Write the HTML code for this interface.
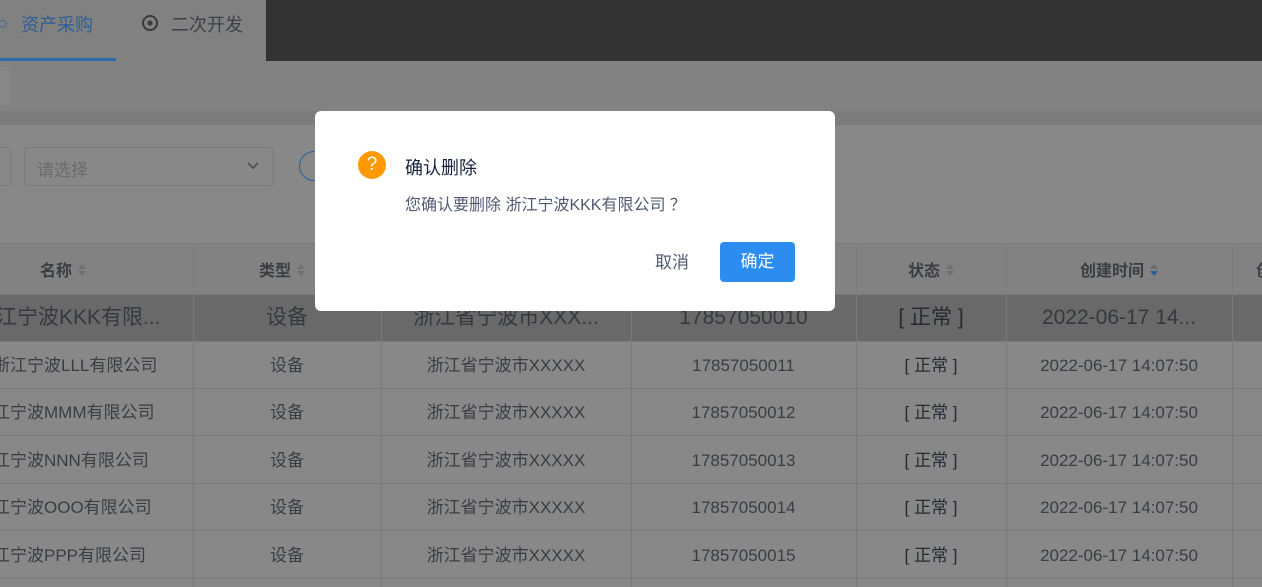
<!DOCTYPE html><html><head><meta charset="utf-8"><style>
*{margin:0;padding:0;box-sizing:border-box}
body{width:1262px;height:587px;overflow:hidden;position:relative;background:#888;font-family:"Liberation Sans","Noto Sans CJK SC",sans-serif;color:#3a3d42}
.a{position:absolute}
.cell{position:absolute;text-align:center;white-space:nowrap;overflow:hidden;line-height:24px;height:24px}
.vl{position:absolute;width:1px;background:#7a7a7a}
.hl{position:absolute;left:0;width:1262px;height:1px;background:#7a7a7a}
.sort{display:inline-block;vertical-align:middle;margin-left:6px;width:8px;height:14px;position:relative;top:-2px}
.sort:before{content:"";position:absolute;top:1px;left:0;border:4px solid transparent;border-bottom:5px solid #6e6e6e;border-top:0}
.sort:after{content:"";position:absolute;bottom:1px;left:0;border:4px solid transparent;border-top:5px solid #6e6e6e;border-bottom:0}
.sort.d:after{border-top-color:#2a5d9a}
.st{color:#262a33}
</style></head><body>
<div class="a" style="left:0;top:0;width:266px;height:61px;background:#818181"></div>
<div class="a" style="left:266px;top:0;width:996px;height:61px;background:#333"></div>
<div class="a" style="left:0;top:58px;width:116px;height:3px;background:#2e6aa8"></div>
<div class="a" style="left:-6px;top:12px;font-size:18px;color:#2e5f94">☼</div>
<div class="a" style="left:21px;top:11px;font-size:18px;color:#2e5f94">资产采购</div>
<div class="a" style="left:142px;top:15px;width:16px;height:16px;border-radius:50%;border:2px solid #3a3a3a;background:radial-gradient(circle,#3a3a3a 0 2px,transparent 3px)"></div>
<div class="a" style="left:171px;top:11px;font-size:18px;color:#3e4147">二次开发</div>
<div class="a" style="left:0;top:61px;width:1262px;height:50px;background:#828282"></div>
<div class="a" style="left:-10px;top:67px;width:20px;height:38px;border-radius:3px;background:#878787"></div>
<div class="a" style="left:0;top:111px;width:1262px;height:14px;background:#7c7c7c"></div>
<div class="a" style="left:-10px;top:147px;width:21px;height:39px;border:1px solid #7a7a7a;border-radius:4px"></div>
<div class="a" style="left:24px;top:147px;width:250px;height:39px;border:1px solid #7a7a7a;border-radius:4px;font-size:17px;color:#6a6a6a;padding:8px 0 0 12px">请选择<svg style="position:absolute;right:14px;top:14px" width="12" height="8" viewBox="0 0 12 8"><path d="M1 1l5 5 5-5" fill="none" stroke="#555" stroke-width="2"/></svg></div>
<div class="a" style="left:299px;top:151px;width:30px;height:30px;border:1px solid #2e5f94;border-radius:50%"></div>
<div class="a" style="left:0;top:243px;width:1262px;height:51px;background:#828282"></div>
<div class="a" style="left:0;top:294px;width:1262px;height:47px;background:#696969"></div>
<div class="hl" style="top:243px"></div><div class="hl" style="top:294px"></div><div class="hl" style="top:341px"></div><div class="hl" style="top:388px"></div><div class="hl" style="top:435px"></div><div class="hl" style="top:483px"></div><div class="hl" style="top:530px"></div><div class="hl" style="top:578px"></div>
<div class="vl" style="left:193px;top:243px;height:344px"></div><div class="vl" style="left:381px;top:243px;height:344px"></div><div class="vl" style="left:631px;top:243px;height:344px"></div><div class="vl" style="left:856px;top:243px;height:344px"></div><div class="vl" style="left:1006px;top:243px;height:344px"></div><div class="vl" style="left:1232px;top:243px;height:344px"></div>
<div style="font-weight:bold;font-size:16px;color:#3a3d42">
<div class="cell" style="left:40px;width:193px;top:260px;text-align:left">名称<i class="sort"></i></div>
<div class="cell" style="left:193px;width:188px;top:260px;text-align:left;padding-left:66px">类型<i class="sort"></i></div>
<div class="cell" style="left:856px;width:150px;top:260px">状态<i class="sort"></i></div>
<div class="cell" style="left:1006px;width:226px;top:260px">创建时间<i class="sort d"></i></div>
<div class="cell" style="left:1256px;top:260px">创</div>
</div>
<div style="font-size:21px;color:#35383d">
<div class="cell" style="left:-4px;top:306px;text-align:left">江宁波KKK有限...</div>
<div class="cell" style="left:193px;width:188px;top:306px">设备</div>
<div class="cell" style="left:381px;width:250px;top:306px">浙江省宁波市XXX...</div>
<div class="cell" style="left:631px;width:225px;top:306px">17857050010</div>
<div class="cell st" style="left:856px;width:150px;top:306px">[ 正常 ]</div>
<div class="cell" style="left:1006px;width:226px;top:306px">2022-06-17 14...</div>
</div>
<div style="font-size:17px;color:#3a3d42">
<div class="cell" style="left:-7px;top:354px;text-align:left">浙江宁波LLL有限公司</div>
<div class="cell" style="left:-7px;top:401px;text-align:left">江宁波MMM有限公司</div>
<div class="cell" style="left:-7px;top:449px;text-align:left">江宁波NNN有限公司</div>
<div class="cell" style="left:-7px;top:496px;text-align:left">江宁波OOO有限公司</div>
<div class="cell" style="left:-7px;top:544px;text-align:left">江宁波PPP有限公司</div>
<div class="cell" style="left:193px;width:188px;top:354px">设备</div><div class="cell" style="left:381px;width:250px;top:354px">浙江省宁波市XXXXX</div><div class="cell" style="left:631px;width:225px;top:354px">17857050011</div><div class="cell st" style="left:856px;width:150px;top:354px">[ 正常 ]</div><div class="cell" style="left:1006px;width:226px;top:354px">2022-06-17 14:07:50</div>
<div class="cell" style="left:193px;width:188px;top:401px">设备</div><div class="cell" style="left:381px;width:250px;top:401px">浙江省宁波市XXXXX</div><div class="cell" style="left:631px;width:225px;top:401px">17857050012</div><div class="cell st" style="left:856px;width:150px;top:401px">[ 正常 ]</div><div class="cell" style="left:1006px;width:226px;top:401px">2022-06-17 14:07:50</div>
<div class="cell" style="left:193px;width:188px;top:449px">设备</div><div class="cell" style="left:381px;width:250px;top:449px">浙江省宁波市XXXXX</div><div class="cell" style="left:631px;width:225px;top:449px">17857050013</div><div class="cell st" style="left:856px;width:150px;top:449px">[ 正常 ]</div><div class="cell" style="left:1006px;width:226px;top:449px">2022-06-17 14:07:50</div>
<div class="cell" style="left:193px;width:188px;top:496px">设备</div><div class="cell" style="left:381px;width:250px;top:496px">浙江省宁波市XXXXX</div><div class="cell" style="left:631px;width:225px;top:496px">17857050014</div><div class="cell st" style="left:856px;width:150px;top:496px">[ 正常 ]</div><div class="cell" style="left:1006px;width:226px;top:496px">2022-06-17 14:07:50</div>
<div class="cell" style="left:193px;width:188px;top:544px">设备</div><div class="cell" style="left:381px;width:250px;top:544px">浙江省宁波市XXXXX</div><div class="cell" style="left:631px;width:225px;top:544px">17857050015</div><div class="cell st" style="left:856px;width:150px;top:544px">[ 正常 ]</div><div class="cell" style="left:1006px;width:226px;top:544px">2022-06-17 14:07:50</div>
</div>
<div class="a" style="left:315px;top:111px;width:520px;height:200px;background:#fff;border-radius:6px"></div>
<div class="a" style="left:358px;top:151px;width:28px;height:28px;border-radius:50%;background:#ff9900;color:#fff;font-size:19px;text-align:center;line-height:28px">?</div>
<div class="a" style="left:405px;top:156px;font-size:18px;line-height:24px;color:#17233d">确认删除</div>
<div class="a" style="left:405px;top:194px;font-size:16px;line-height:24px;color:#515a6e">您确认要删除 浙江宁波KKK有限公司 ？</div>
<div class="a" style="left:655px;top:251px;font-size:17px;line-height:24px;color:#515a6e">取消</div>
<div class="a" style="left:720px;top:242px;width:75px;height:40px;background:#2d8cf0;border-radius:4px;color:#fff;font-size:17px;text-align:center;line-height:40px">确定</div>
</body></html>
